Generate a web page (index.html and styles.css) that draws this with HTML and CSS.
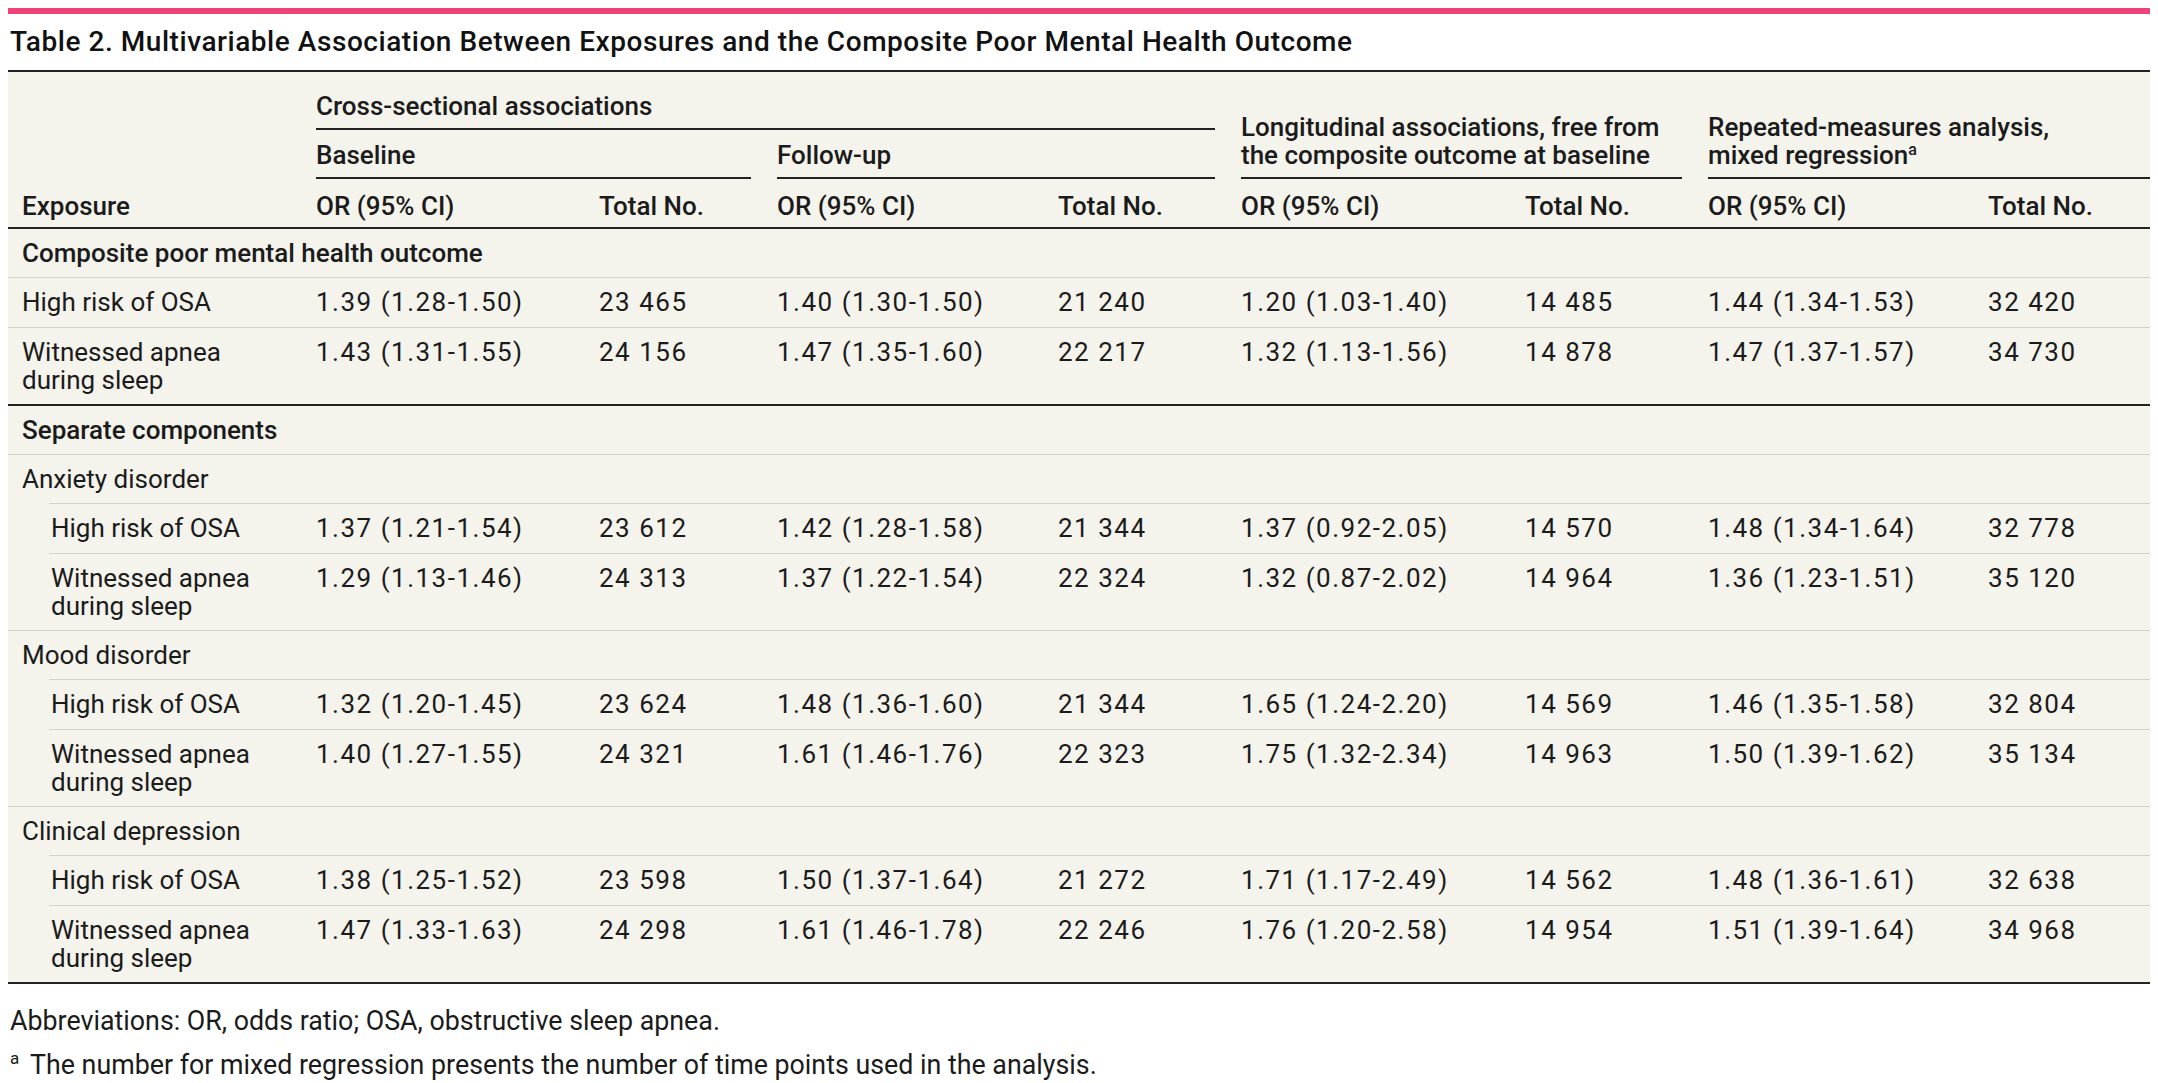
FILE: index.html
```html
<!DOCTYPE html>
<html lang="en">
<head>
<meta charset="utf-8">
<title>Table 2</title>
<link rel="stylesheet" href="styles.css">
</head>
<body>
<div class="page">
  <div class="accent"></div>
  <h1 class="title">Table 2. Multivariable Association Between Exposures and the Composite Poor Mental Health Outcome</h1>
  <table class="data">
    <colgroup>
      <col class="w-stub">
      <col class="w-or1"><col class="w-n1">
      <col class="w-or2"><col class="w-n2">
      <col class="w-or3"><col class="w-n3">
      <col class="w-or4"><col class="w-n4">
    </colgroup>
    <thead>
      <tr class="hr1">
        <th rowspan="3" class="stub">Exposure</th>
        <th colspan="4" class="ruled">Cross-sectional associations</th>
        <th colspan="2" rowspan="2" class="ruled">Longitudinal associations, free from<br>the composite outcome at baseline</th>
        <th colspan="2" rowspan="2" class="ruled full">Repeated-measures analysis,<br>mixed regression<sup>a</sup></th>
      </tr>
      <tr class="hr2">
        <th colspan="2" class="ruled">Baseline</th>
        <th colspan="2" class="ruled">Follow-up</th>
      </tr>
      <tr class="hr3">
        <th>OR (95% CI)</th><th>Total No.</th>
        <th>OR (95% CI)</th><th>Total No.</th>
        <th>OR (95% CI)</th><th>Total No.</th>
        <th>OR (95% CI)</th><th>Total No.</th>
      </tr>
    </thead>
    <tbody>
      <tr class="section"><td colspan="9">Composite poor mental health outcome</td></tr>
      <tr>
        <td class="lbl">High risk of OSA</td>
        <td>1.39 (1.28-1.50)</td><td>23 465</td>
        <td>1.40 (1.30-1.50)</td><td>21 240</td>
        <td>1.20 (1.03-1.40)</td><td>14 485</td>
        <td>1.44 (1.34-1.53)</td><td>32 420</td>
      </tr>
      <tr>
        <td class="lbl">Witnessed apnea<br>during sleep</td>
        <td>1.43 (1.31-1.55)</td><td>24 156</td>
        <td>1.47 (1.35-1.60)</td><td>22 217</td>
        <td>1.32 (1.13-1.56)</td><td>14 878</td>
        <td>1.47 (1.37-1.57)</td><td>34 730</td>
      </tr>
      <tr class="section break"><td colspan="9">Separate components</td></tr>
      <tr class="group"><td colspan="9">Anxiety disorder</td></tr>
      <tr class="sub">
        <td class="lbl">High risk of OSA</td>
        <td>1.37 (1.21-1.54)</td><td>23 612</td>
        <td>1.42 (1.28-1.58)</td><td>21 344</td>
        <td>1.37 (0.92-2.05)</td><td>14 570</td>
        <td>1.48 (1.34-1.64)</td><td>32 778</td>
      </tr>
      <tr class="sub">
        <td class="lbl">Witnessed apnea<br>during sleep</td>
        <td>1.29 (1.13-1.46)</td><td>24 313</td>
        <td>1.37 (1.22-1.54)</td><td>22 324</td>
        <td>1.32 (0.87-2.02)</td><td>14 964</td>
        <td>1.36 (1.23-1.51)</td><td>35 120</td>
      </tr>
      <tr class="group"><td colspan="9">Mood disorder</td></tr>
      <tr class="sub">
        <td class="lbl">High risk of OSA</td>
        <td>1.32 (1.20-1.45)</td><td>23 624</td>
        <td>1.48 (1.36-1.60)</td><td>21 344</td>
        <td>1.65 (1.24-2.20)</td><td>14 569</td>
        <td>1.46 (1.35-1.58)</td><td>32 804</td>
      </tr>
      <tr class="sub">
        <td class="lbl">Witnessed apnea<br>during sleep</td>
        <td>1.40 (1.27-1.55)</td><td>24 321</td>
        <td>1.61 (1.46-1.76)</td><td>22 323</td>
        <td>1.75 (1.32-2.34)</td><td>14 963</td>
        <td>1.50 (1.39-1.62)</td><td>35 134</td>
      </tr>
      <tr class="group"><td colspan="9">Clinical depression</td></tr>
      <tr class="sub">
        <td class="lbl">High risk of OSA</td>
        <td>1.38 (1.25-1.52)</td><td>23 598</td>
        <td>1.50 (1.37-1.64)</td><td>21 272</td>
        <td>1.71 (1.17-2.49)</td><td>14 562</td>
        <td>1.48 (1.36-1.61)</td><td>32 638</td>
      </tr>
      <tr class="sub">
        <td class="lbl">Witnessed apnea<br>during sleep</td>
        <td>1.47 (1.33-1.63)</td><td>24 298</td>
        <td>1.61 (1.46-1.78)</td><td>22 246</td>
        <td>1.76 (1.20-2.58)</td><td>14 954</td>
        <td>1.51 (1.39-1.64)</td><td>34 968</td>
      </tr>
    </tbody>
  </table>
  <p class="note">Abbreviations: OR, odds ratio; OSA, obstructive sleep apnea.</p>
  <p class="note fn"><sup>a</sup><span>The number for mixed regression presents the number of time points used in the analysis.</span></p>
</div>
</body>
</html>
```

FILE: styles.css
```css
html, body {
  margin: 0;
  padding: 0;
  background: #ffffff;
}

body {
  padding: 8px;
  font-family: Roboto, "Liberation Sans", Arial, sans-serif;
  color: #1b1b1b;
}

.page {
  width: 2142px;
}

.accent {
  height: 6px;
  background: #ef4479;
}

.title {
  margin: 12px 0 12px;
  font-size: 28px;
  line-height: 32px;
  font-weight: 500;
  letter-spacing: 0.55px;
  color: #111111;
  padding-left: 2px;
}

.data {
  width: 2142px;
  table-layout: fixed;
  border-collapse: separate;
  border-spacing: 0;
  background: #f4f3ec;
  border-top: 2px solid #222222;
  border-bottom: 2px solid #222222;
  font-size: 26px;
  line-height: 28px;
}

.w-stub { width: 308px; }
.w-or1 { width: 283px; }
.w-n1 { width: 178px; }
.w-or2 { width: 281px; }
.w-n2 { width: 183px; }
.w-or3 { width: 284px; }
.w-n3 { width: 183px; }
.w-or4 { width: 280px; }
.w-n4 { width: 162px; }

.data th {
  text-align: left;
  font-weight: 500;
  vertical-align: bottom;
  padding: 0;
  white-space: nowrap;
}

.data th sup {
  font-size: 16px;
  line-height: 0;
  vertical-align: 9px;
}

.data th.stub {
  padding: 0 0 7px 14px;
  border-bottom: 2px solid #222222;
}

.data th.ruled {
  background-image: linear-gradient(#222222, #222222);
  background-repeat: no-repeat;
  background-position: left bottom;
  background-size: calc(100% - 26px) 2px;
}

.data th.ruled.full {
  background-size: 100% 2px;
}

.hr1 th.ruled {
  padding: 20px 0 10px;
}

.hr2 th.ruled {
  padding: 11px 0 10px;
}

.hr3 th {
  padding: 13px 0 7px;
  border-bottom: 2px solid #222222;
}

.data td {
  padding: 10px 0 10.3px;
  vertical-align: top;
  white-space: nowrap;
  border-top: 1px solid #d8d2c6;
  letter-spacing: 1.5px;
}

.data td.lbl,
.data tr.section td,
.data tr.group td {
  letter-spacing: normal;
}

.data tbody tr:first-child td {
  border-top: none;
}

.data td.lbl,
.data tr.section td,
.data tr.group td {
  padding-left: 14px;
}

.data tr.section td {
  font-weight: 500;
}

.data tr.break td {
  border-top: 2px solid #222222;
}

.data tr.sub td.lbl {
  padding-left: 43px;
  border-top-color: transparent;
  background-image: linear-gradient(#d8d2c6, #d8d2c6);
  background-repeat: no-repeat;
  background-origin: border-box;
  background-position: 41px 0;
  background-size: 100% 1px;
}

.note {
  margin: 22px 0 0;
  font-size: 26.8px;
  line-height: 30px;
  padding-left: 2px;
}

.note + .note {
  margin-top: 14px;
}

.fn sup {
  font-size: 17px;
  line-height: 0;
  vertical-align: 10px;
  display: inline-block;
  width: 20px;
}
```
